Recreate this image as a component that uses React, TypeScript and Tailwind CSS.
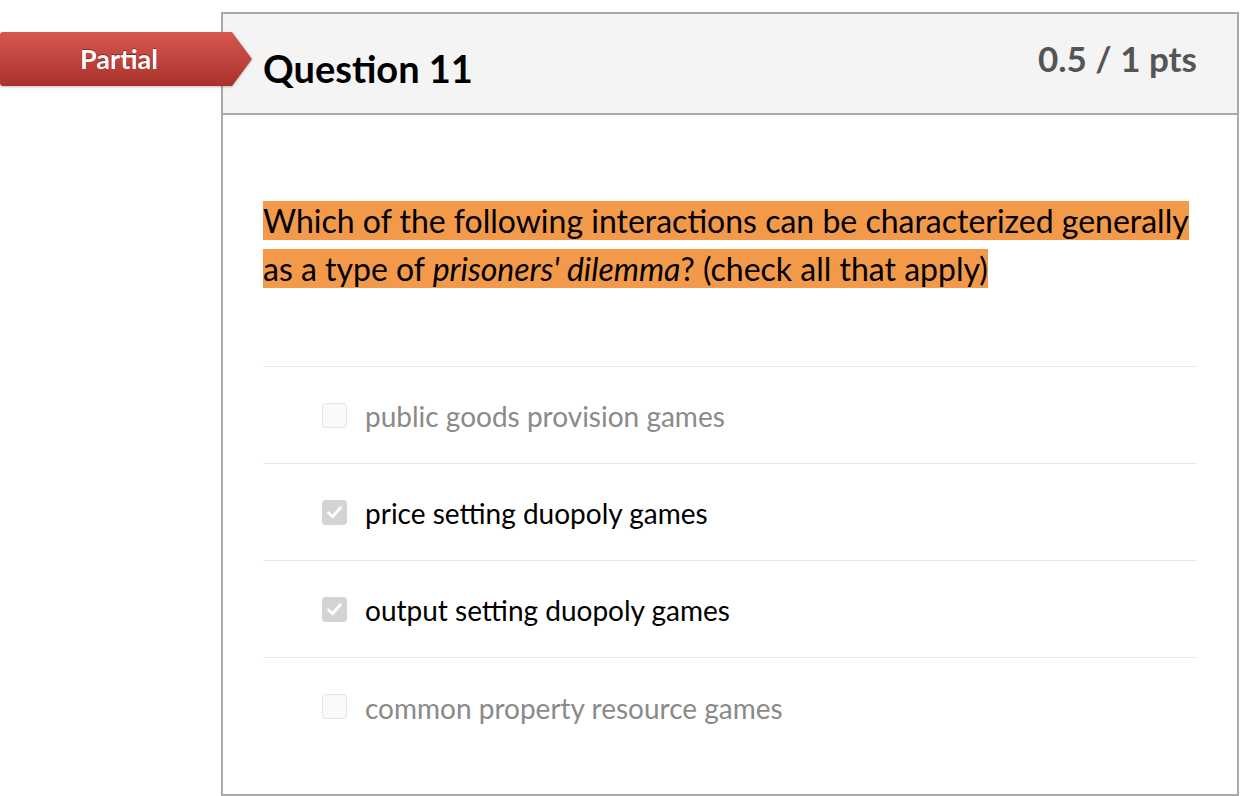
import React from "react";

type Answer = {
  label: string;
  checked: boolean;
};

const answers: Answer[] = [
  { label: "public goods provision games", checked: false },
  { label: "price setting duopoly games", checked: true },
  { label: "output setting duopoly games", checked: true },
  { label: "common property resource games", checked: false },
];

const CheckBox: React.FC<{ checked: boolean }> = ({ checked }) =>
  checked ? (
    <span className="flex h-[25px] w-[25px] shrink-0 items-center justify-center rounded-[4px] bg-[#d4d4d4]">
      <svg width="17" height="17" viewBox="0 0 16 16" fill="none">
        <path
          d="M2.5 8.5 L6.2 12 L13.5 3.5"
          stroke="#ffffff"
          strokeWidth="2.8"
          strokeLinecap="round"
          strokeLinejoin="round"
        />
      </svg>
    </span>
  ) : (
    <span className="block h-[25px] w-[25px] shrink-0 rounded-[4px] border border-[#e3e3e3] bg-[#fafafa]" />
  );

const PartialBadge: React.FC = () => (
  <div className="absolute left-0 top-[32px] flex h-[54px] drop-shadow-[0_1px_1px_rgba(0,0,0,0.25)]">
    <div className="flex h-full w-[232px] items-center justify-center rounded-l-[3px] bg-gradient-to-b from-[#d85750] to-[#a8322b] pl-[6px]">
      <span className="text-[27px] font-bold text-white [text-shadow:0_-1px_0_rgba(0,0,0,0.35)]">
        Partial
      </span>
    </div>
    <svg width="21" height="54" viewBox="0 0 21 54" className="-ml-px">
      <defs>
        <linearGradient id="tip" x1="0" y1="0" x2="0" y2="1">
          <stop offset="0" stopColor="#d85750" />
          <stop offset="1" stopColor="#a8322b" />
        </linearGradient>
      </defs>
      <polygon points="0,0 1,0 21,27 1,54 0,54" fill="url(#tip)" />
    </svg>
  </div>
);

export default function App() {
  return (
    <div className="relative min-h-[796px] bg-white font-['Lato','Noto_Sans',sans-serif]">
      <PartialBadge />
      <div className="pl-[221px] pt-[12px]">
        <div className="flex h-[784px] w-[1018px] flex-col border-2 border-[#a9a9a9]">
          <div className="flex h-[101px] items-start justify-between border-b-2 border-[#a9a9a9] bg-[#f4f4f4] pl-[40px] pr-[40px]">
            <h2 className="mt-[31px] text-[38px] font-bold leading-[46px] text-black">
              Question 11
            </h2>
            <div className="mt-[22px] text-[35px] font-bold leading-[44px] text-[#555555]">
              0.5 / 1 pts
            </div>
          </div>

          <div className="flex flex-col px-[40px]">
            <p className="mt-[82px] text-[32px] leading-[48px] text-black">
              <span className="bg-[#f2994a]">
                Which of the following interactions can be characterized generally as a type of{" "}
                <em className="italic">prisoners' dilemma</em>? (check all that apply)
              </span>
            </p>

            <div className="mt-[73px] border-t border-[#e8e8e8]">
              {answers.map((a, i) => (
                <div
                  key={a.label}
                  className={`flex h-[97px] items-center gap-[18px] pl-[59px] ${
                    i < answers.length - 1 ? "border-b border-[#e8e8e8]" : ""
                  }`}
                >
                  <CheckBox checked={a.checked} />
                  <span
                    className={`pt-[2px] text-[28px] ${a.checked ? "text-black" : "text-[#8a8a8a]"}`}
                  >
                    {a.label}
                  </span>
                </div>
              ))}
            </div>
          </div>
        </div>
      </div>
    </div>
  );
}
